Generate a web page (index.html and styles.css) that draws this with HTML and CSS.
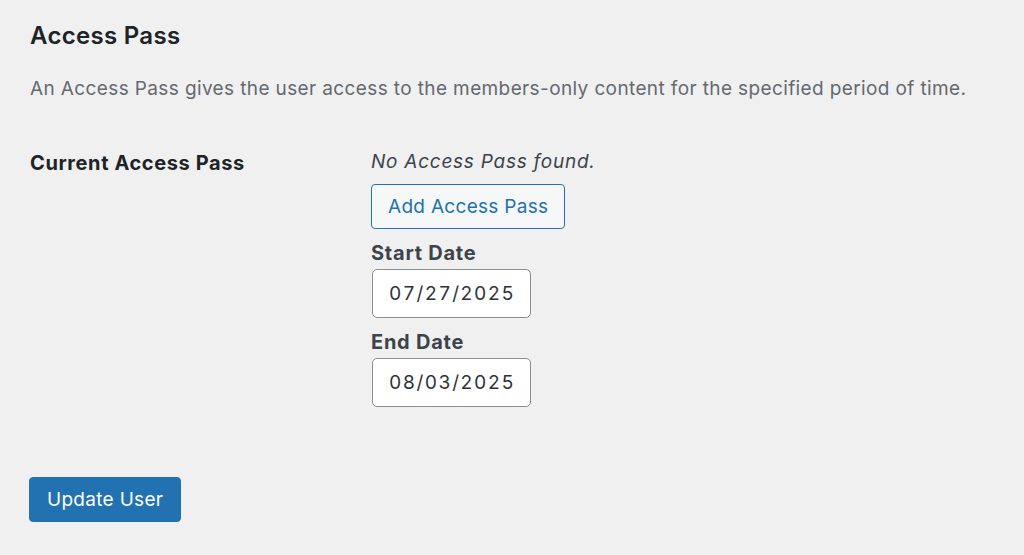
FILE: index.html
```html
<!DOCTYPE html>
<html lang="en">
<head>
    <title>Access Pass</title>
    <link rel="stylesheet" href="styles.css">
</head>
<body>
    <h2 class="section-title">Access Pass</h2>
    <p class="description">An Access Pass gives the user access to the members-only content for the specified period of time.</p>

    <div class="form-row">
        <div class="form-label">Current Access Pass</div>
        <div class="form-field">
            <p class="empty-note">No Access Pass found.</p>
            <button class="secondary-btn">Add Access Pass</button>
            <label class="field-label" for="start">Start Date</label>
            <input class="date-input" id="start" value="07/27/2025" />
            <label class="field-label" for="end">End Date</label>
            <input class="date-input" id="end" value="08/03/2025" />
        </div>
    </div>

    <div class="submit-row">
        <button class="primary-btn">Update User</button>
    </div>
</body>
</html>
```

FILE: styles.css
```css
body {
    margin: 0;
    padding: 20px 30px 0 30px;
    background-color: #f0f0f1;
    color: #1d2327;
    font-family: Inter, "Noto Sans", sans-serif;
    font-size: 19px;
}
.section-title {
    font-size: 24px;
    font-weight: 600;
    letter-spacing: 0.3px;
    margin: 0;
    line-height: 32px;
}
.description {
    color: #646970;
    margin: 23px 0 0 0;
    line-height: 28px;
    letter-spacing: 0.38px;
}
.form-row {
    display: grid;
    grid-template-columns: 341px 1fr;
    margin-top: 46px;
}
.form-label {
    font-size: 20px;
    font-weight: 700;
    line-height: 28px;
    letter-spacing: 0.6px;
}
.form-field {
    display: flex;
    flex-direction: column;
    align-items: flex-start;
}
.empty-note {
    font-style: italic;
    margin: 0;
    line-height: 26px;
    color: #3c434a;
    letter-spacing: 0.75px;
}
.secondary-btn {
    margin-top: 9px;
    height: 45px;
    padding: 0 16px;
    font-family: inherit;
    font-size: 19px;
    letter-spacing: 0.3px;
    color: #2271b1;
    background-color: #f6f7f7;
    border: 1px solid #2271b1;
    border-radius: 4px;
}
.field-label {
    font-size: 20px;
    font-weight: 700;
    color: #3c434a;
    margin-top: 11px;
    line-height: 26px;
    letter-spacing: 0.75px;
}
.date-input {
    margin: 3px 0 0 1px;
    width: 159px;
    height: 49px;
    box-sizing: border-box;
    padding: 0 16px;
    font-family: inherit;
    font-size: 19px;
    font-variant-numeric: tabular-nums;
    letter-spacing: 1.4px;
    color: #2c3338;
    background-color: #fff;
    border: 1px solid #8c8f94;
    border-radius: 5px;
}
.submit-row {
    margin-top: 70px;
}
.primary-btn {
    margin-left: -1px;
    height: 45px;
    padding: 0 17px;
    font-family: inherit;
    font-size: 19px;
    letter-spacing: 0.3px;
    color: #fff;
    background-color: #2271b1;
    border: 1px solid #2271b1;
    border-radius: 4px;
}
```
